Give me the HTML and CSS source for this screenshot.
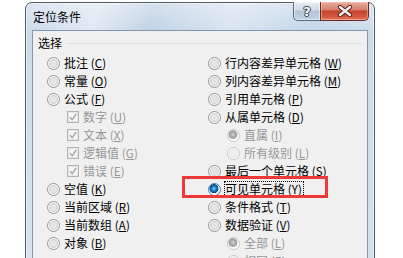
FILE: index.html
```html
<!DOCTYPE html>
<html lang="zh-CN">
<head>
<meta charset="utf-8">
<title>定位条件</title>
<link rel="stylesheet" href="styles.css">
</head>
<body>
<div class="window">
  <div class="titlebar">
    <span class="title">定位条件</span>
    <div class="caption-buttons">
      <div class="cbtn help"><span class="qmark">?</span></div>
      <div class="cbtn close">
        <svg width="16" height="12" viewBox="0 0 16 12">
          <path d="M3 2 L13 10 M13 2 L3 10" stroke="#5a1d14" stroke-width="4.2" stroke-linecap="round" fill="none"/>
          <path d="M3 2 L13 10 M13 2 L3 10" stroke="#f4f1ee" stroke-width="2.4" stroke-linecap="round" fill="none"/>
        </svg>
      </div>
    </div>
  </div>
  <div class="client">
    <div class="legend"><span>选择</span><i class="rule"></i></div>
    <div class="cols">
      <div class="col left">
        <div class="opt"><span class="radio"></span><span class="lbl">批注 <span class="key">(<u>C</u>)</span></span></div>
        <div class="opt"><span class="radio"></span><span class="lbl">常量 <span class="key">(<u>O</u>)</span></span></div>
        <div class="opt"><span class="radio"></span><span class="lbl">公式 <span class="key">(<u>F</u>)</span></span></div>
        <div class="opt sub-l off"><span class="check"><svg width="10" height="10" viewBox="0 0 10 10"><path d="M2 5.2 L4.2 7.6 L8.2 2" stroke="#a9a9a9" stroke-width="1.5" fill="none"/></svg></span><span class="lbl">数字 <span class="key">(<u>U</u>)</span></span></div>
        <div class="opt sub-l off"><span class="check"><svg width="10" height="10" viewBox="0 0 10 10"><path d="M2 5.2 L4.2 7.6 L8.2 2" stroke="#a9a9a9" stroke-width="1.5" fill="none"/></svg></span><span class="lbl">文本 <span class="key">(<u>X</u>)</span></span></div>
        <div class="opt sub-l off"><span class="check"><svg width="10" height="10" viewBox="0 0 10 10"><path d="M2 5.2 L4.2 7.6 L8.2 2" stroke="#a9a9a9" stroke-width="1.5" fill="none"/></svg></span><span class="lbl">逻辑值 <span class="key">(<u>G</u>)</span></span></div>
        <div class="opt sub-l off"><span class="check"><svg width="10" height="10" viewBox="0 0 10 10"><path d="M2 5.2 L4.2 7.6 L8.2 2" stroke="#a9a9a9" stroke-width="1.5" fill="none"/></svg></span><span class="lbl">错误 <span class="key">(<u>E</u>)</span></span></div>
        <div class="opt"><span class="radio"></span><span class="lbl">空值 <span class="key">(<u>K</u>)</span></span></div>
        <div class="opt"><span class="radio"></span><span class="lbl">当前区域 <span class="key">(<u>R</u>)</span></span></div>
        <div class="opt"><span class="radio"></span><span class="lbl">当前数组 <span class="key">(<u>A</u>)</span></span></div>
        <div class="opt"><span class="radio"></span><span class="lbl">对象 <span class="key">(<u>B</u>)</span></span></div>
      </div>
      <div class="col right">
        <div class="opt"><span class="radio"></span><span class="lbl">行内容差异单元格 <span class="key">(<u>W</u>)</span></span></div>
        <div class="opt"><span class="radio"></span><span class="lbl">列内容差异单元格 <span class="key">(<u>M</u>)</span></span></div>
        <div class="opt"><span class="radio"></span><span class="lbl">引用单元格 <span class="key">(<u>P</u>)</span></span></div>
        <div class="opt"><span class="radio"></span><span class="lbl">从属单元格 <span class="key">(<u>D</u>)</span></span></div>
        <div class="opt sub-r off"><span class="radio dis sel-dis"></span><span class="lbl">直属 <span class="key">(<u>I</u>)</span></span></div>
        <div class="opt sub-r off"><span class="radio dis"></span><span class="lbl">所有级别 <span class="key">(<u>L</u>)</span></span></div>
        <div class="opt"><span class="radio"></span><span class="lbl">最后一个单元格 <span class="key">(<u>S</u>)</span></span></div>
        <div class="opt"><span class="radio sel"></span><span class="lbl focus">可见单元格 <span class="key">(<u>Y</u>)</span></span></div>
        <div class="opt"><span class="radio"></span><span class="lbl">条件格式 <span class="key">(<u>T</u>)</span></span></div>
        <div class="opt"><span class="radio"></span><span class="lbl">数据验证 <span class="key">(<u>V</u>)</span></span></div>
        <div class="opt sub-r off"><span class="radio dis sel-dis"></span><span class="lbl">全部 <span class="key">(<u>L</u>)</span></span></div>
        <div class="opt sub-r off"><span class="radio dis"></span><span class="lbl">相同 <span class="key">(<u>E</u>)</span></span></div>
      </div>
    </div>
  </div>
</div>
<div class="callout"></div>
</body>
</html>
```

FILE: styles.css
```css
* { box-sizing: border-box; }

html, body {
  margin: 0;
  padding: 0;
}

body {
  width: 403px;
  height: 258px;
  overflow: hidden;
  background: #ffffff;
  position: relative;
  font-family: "Noto Sans CJK SC", "Noto Sans", sans-serif;
  font-size: 12px;
  color: #000;
}

.window {
  margin: 2px 0 0 25px;
  width: 350px;
  height: 300px;
  border: 1px solid #4f5866;
  border-radius: 7px 7px 0 0;
  padding: 0 6px;
  display: flex;
  flex-direction: column;
  background:
    linear-gradient(180deg, rgba(255,255,255,0.35) 0px, rgba(255,255,255,0) 30px),
    linear-gradient(100deg, #c9d9ea 0%, #dfe8f2 18%, #bfd1e4 32%, #d8e4f0 52%, #c3d5e8 72%, #d5e2ef 100%);
  box-shadow: inset 0 0 0 1px rgba(255,255,255,0.55);
}

.titlebar {
  height: 27px;
  display: flex;
  align-items: center;
  justify-content: space-between;
}

.title {
  padding-left: 1px;
  font-size: 12px;
  line-height: 14px;
  color: #000;
}

.caption-buttons {
  align-self: flex-start;
  margin-top: -1px;
  margin-right: -1px;
  display: flex;
  height: 19px;
}

.cbtn {
  height: 19px;
  display: flex;
  align-items: center;
  justify-content: center;
  border: 1px solid #5b6877;
  border-top: none;
}

.help {
  width: 27px;
  border-right: none;
  border-radius: 0 0 0 5px;
  background: linear-gradient(180deg, #e6edf5 0%, #cfdbe8 45%, #b3c4d8 50%, #c2d2e3 100%);
  box-shadow: inset 0 0 0 1px rgba(255,255,255,0.55);
}

.qmark {
  font-family: "DejaVu Sans", sans-serif;
  font-weight: bold;
  font-size: 13px;
  line-height: 13px;
  color: #ffffff;
  text-shadow: 0 0 1px #2b3440, 1px 0 0 #3a4555, -1px 0 0 #3a4555, 0 1px 0 #3a4555, 0 -1px 0 #3a4555;
}

.close {
  width: 49px;
  border-color: #6b2a22;
  border-radius: 0 0 5px 0;
  background: linear-gradient(180deg, #e9ab9b 0%, #d9826f 42%, #c5462f 50%, #d4553a 80%, #e0795e 100%);
  box-shadow: inset 0 0 0 1px rgba(255,220,210,0.45);
}

.client {
  flex: 1;
  background: #f0f0f0;
  border: 1px solid #8597ad;
  padding: 0 5px;
}

.legend {
  display: flex;
  align-items: center;
  height: 16px;
  margin-top: 4px;
  margin-bottom: 3px;
  line-height: 16px;
}

.rule {
  flex: 1;
  height: 1px;
  margin-left: 6px;
  background: #d5dfe5;
}

.cols {
  display: flex;
  padding-left: 9px;
}

.col.left {
  width: 161px;
}

.col.right {
  flex: 1;
}

.opt {
  height: 18px;
  display: flex;
  align-items: center;
  gap: 4px;
  white-space: nowrap;
}

.lbl {
  line-height: 14px;
}

.key {
  font-size: 11.5px;
  letter-spacing: 0.2px;
}

.key u {
  text-underline-offset: 1px;
}

.sub-l { margin-left: 20px; }
.sub-r { margin-left: 19px; }

.off .lbl { color: #979797; }

.radio {
  flex: none;
  width: 13px;
  height: 13px;
  border-radius: 50%;
  border: 1px solid #939393;
  background: radial-gradient(circle at 50% 50%, #dedede 0, #e9e9e9 2.5px, #d2d2d2 4px, #f7f7f7 4.8px, #ffffff 5.5px);
}

.radio.sel {
  border-color: #3d7bad;
  background: radial-gradient(circle at 45% 42%, #8fdcff 0, #2a90dc 1.6px, #0c5a9c 3.6px, #14406a 4.2px, #f7f7f7 4.8px, #ffffff 5.5px);
}

.radio.dis {
  border-color: #c6c6c6;
  background: radial-gradient(circle at 50% 50%, #eeeeee 0, #f2f2f2 3px, #e4e4e4 4px, #fafafa 4.8px, #ffffff 5.5px);
}

.radio.sel-dis {
  background: radial-gradient(circle at 45% 42%, #d6d6d6 0, #b2b2b2 2px, #9d9d9d 3.6px, #b8b8b8 4.2px, #f7f7f7 4.8px, #ffffff 5.5px);
}

.check {
  flex: none;
  width: 12px;
  height: 12px;
  border: 1px solid #b4b4b4;
  background: #f5f5f5;
  box-shadow: inset 0 0 0 1px #e6e6e6;
  display: flex;
  align-items: center;
  justify-content: center;
}

.lbl.focus {
  border: 1px dotted #000;
  padding: 0 1px 0 0;
  margin-left: -1px;
  line-height: 14px;
}

.callout {
  position: absolute;
  left: 182px;
  top: 176px;
  width: 146px;
  height: 22px;
  border: 3px solid #ef3838;
}
```
